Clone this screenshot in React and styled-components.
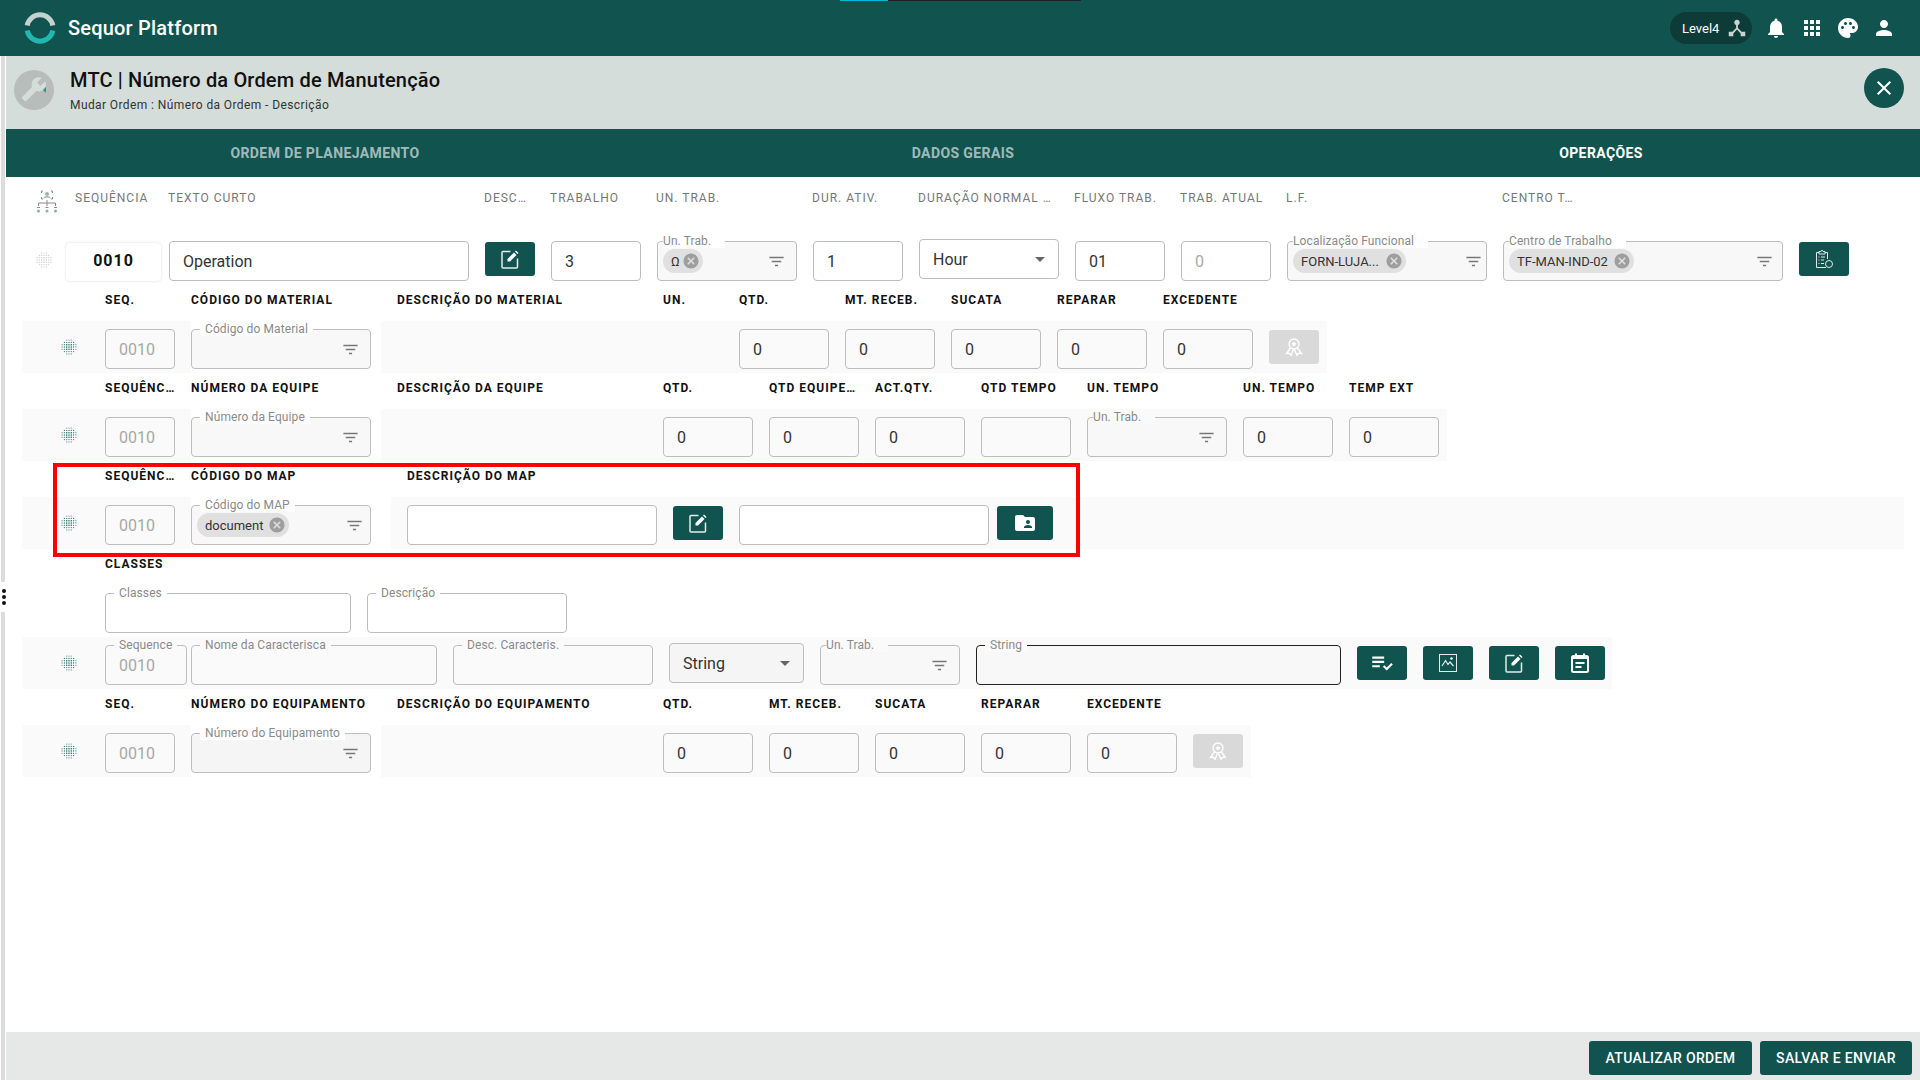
import React from 'react';
import styled, { createGlobalStyle } from 'styled-components';
import {
  MdDeviceHub, MdNotifications, MdApps, MdPalette, MdPerson, MdClose, MdFilterList,
  MdCancel, MdArrowDropDown, MdFolderShared, MdPlaylistAddCheck,
} from 'react-icons/md';

const GlobalStyle = createGlobalStyle`
  html, body { margin: 0; padding: 0; background: #fff; }
  body { font-family: Roboto, "Liberation Sans", sans-serif; }
`;

const TEAL = '#11544f';

const Page = styled.div`
  position: relative;
  width: 1920px;
  height: 1080px;
  overflow: hidden;
  display: flex;
  flex-direction: column;
`;

const TopBar = styled.header`
  position: relative;
  height: 56px;
  flex-shrink: 0;
  background: ${TEAL};
  display: flex;
  align-items: center;
  padding: 0 24px;
  box-sizing: border-box;
`;

const LoadStrip = styled.div`
  position: absolute;
  top: 0;
  left: ${p => p.$left}px;
  width: ${p => p.$w}px;
  height: 1px;
  background: ${p => p.$color};
`;

const Brand = styled.div`
  margin-left: 12px;
  font-size: 20px;
  font-weight: 500;
  color: #fff;
  letter-spacing: 0.2px;
`;

const TopRight = styled.div`
  margin-left: auto;
  display: flex;
  align-items: center;
  gap: 12px;
  color: #fff;
`;

const LevelPill = styled.div`
  width: 82px;
  height: 32px;
  box-sizing: border-box;
  border-radius: 16px;
  background: #0d3c38;
  display: flex;
  align-items: center;
  padding-left: 12px;
  gap: 7px;
  font-size: 13px;
  color: #fff;
  svg { color: #c9d3d1; }
`;

const Body = styled.div`
  flex: 1;
  min-height: 0;
  display: flex;
`;

const LeftStrip = styled.div`
  width: 6px;
  flex-shrink: 0;
  background: linear-gradient(to right, #fff 0 1px, #dcdcdc 1px 5px, #fff 5px);
`;

const KebabHandle = styled.div`
  position: absolute;
  left: 0;
  top: 582px;
  width: 8px;
  height: 30px;
  background: #fff;
  display: flex;
  flex-direction: column;
  align-items: center;
  justify-content: center;
  gap: 2px;
  span {
    width: 4px;
    height: 4px;
    border-radius: 50%;
    background: #111;
  }
`;

const Main = styled.main`
  flex: 1;
  min-width: 0;
  display: flex;
  flex-direction: column;
`;

const SubHeader = styled.div`
  height: 73px;
  flex-shrink: 0;
  background: #d5dddA;
  display: flex;
  align-items: flex-start;
  padding: 12px 16px 0 8px;
  box-sizing: border-box;
`;

const TitleBlock = styled.div`
  margin-left: 16px;
  display: flex;
  flex-direction: column;
  gap: 6px;
`;

const Title = styled.div`
  font-size: 20px;
  line-height: 24px;
  font-weight: 500;
  letter-spacing: 0.17px;
  color: #111;
`;

const SubTitle = styled.div`
  font-size: 12px;
  line-height: 14px;
  color: #333;
  letter-spacing: 0.4px;
`;

const BadgeSvg = styled.svg`
  margin-top: 2px;
  flex-shrink: 0;
`;

const CloseButton = styled.div`
  margin-left: auto;
  width: 40px;
  height: 40px;
  border-radius: 50%;
  background: ${TEAL};
  color: #fff;
  display: flex;
  align-items: center;
  justify-content: center;
`;

const Tabs = styled.nav`
  height: 48px;
  flex-shrink: 0;
  background: ${TEAL};
  display: grid;
  grid-template-columns: repeat(3, 1fr);
`;

const Tab = styled.div`
  display: flex;
  align-items: center;
  justify-content: center;
  padding-bottom: 1px;
  font-size: 14px;
  font-weight: 700;
  letter-spacing: 0.4px;
  color: ${p => (p.$active ? '#fff' : 'rgba(255,255,255,0.62)')};
`;

const Content = styled.section`
  position: relative;
  flex: 1;
  min-height: 0;
`;

const Highlight = styled.div`
  position: absolute;
  left: 47px;
  top: 286px;
  width: 1027px;
  height: 94px;
  box-sizing: border-box;
  border: 4px solid #f00;
  pointer-events: none;
`;

const ColumnBar = styled.div`
  height: 64px;
  box-sizing: border-box;
  padding-left: 30px;
  display: flex;
  align-items: flex-start;
`;

const ColumnIcon = styled.div`
  width: 39px;
  margin-top: 13px;
  flex-shrink: 0;
`;

const ColumnLabel = styled.div`
  width: ${p => p.$w}px;
  flex-shrink: 0;
  margin-top: 14px;
  font-size: 12px;
  line-height: 14px;
  letter-spacing: 1px;
  color: #777;
  white-space: nowrap;
`;

const OperationRow = styled.div`
  height: 44px;
  box-sizing: border-box;
  padding-left: 30px;
  display: flex;
  align-items: flex-start;
  gap: 16px;
`;

const SeqCard = styled.div`
  width: 95px;
  height: 38px;
  margin: 2px -8px 0 0;
  box-sizing: border-box;
  flex-shrink: 0;
  border-radius: 4px;
  box-shadow: 0 0 3px rgba(0, 0, 0, 0.14);
  background: #fff;
  display: flex;
  align-items: center;
  justify-content: center;
  font-size: 16px;
  font-weight: 700;
  letter-spacing: 1px;
  color: #111;
  padding-bottom: 4px;
`;

const HeadRow = styled.div`
  height: 36px;
  box-sizing: border-box;
  padding: 8px 0 0 99px;
  display: flex;
`;

const Head = styled.div`
  width: ${p => (p.$w ? `${p.$w}px` : 'auto')};
  flex-shrink: 0;
  font-size: 12px;
  line-height: 14px;
  font-weight: 700;
  letter-spacing: 1px;
  color: #111;
  white-space: nowrap;
`;

const Row = styled.div`
  height: 52px;
  margin-left: 16px;
  width: ${p => (p.$w ? `${p.$w}px` : 'auto')};
  display: flex;
  align-items: stretch;
`;

const LeadCell = styled.div`
  width: 169px;
  flex-shrink: 0;
  box-sizing: border-box;
  background: #fafafa;
  padding: 8px 0 0 39px;
  display: flex;
  align-items: flex-start;
  gap: 28px;
`;

const SelectCell = styled.div`
  width: ${p => p.$w}px;
  flex-shrink: 0;
  box-sizing: border-box;
  padding-top: 8px;
  background: #fff;
`;

const RestCell = styled.div`
  flex: 1;
  box-sizing: border-box;
  background: #fafafa;
  padding: 8px 8px 0 ${p => p.$lead || 0}px;
  display: flex;
  align-items: flex-start;
  gap: 16px;
`;

const Spacer = styled.div`
  width: ${p => p.$w}px;
  flex-shrink: 0;
`;

const Box = styled.div`
  position: relative;
  width: ${p => p.$w}px;
  height: 40px;
  flex-shrink: 0;
  box-sizing: border-box;
  border: ${p => (p.$dark ? '1.5px solid #222' : '1px solid #bdbdbd')};
  border-radius: 4px;
  background: ${p => p.$fill || 'transparent'};
  display: flex;
  align-items: center;
  padding: 0 13px;
  font-size: 16px;
  color: ${p => (p.$muted ? '#a8a8a8' : '#333')};
`;

const Legend = styled.span`
  position: absolute;
  top: -8px;
  left: ${p => (p.$tight ? 5 : 8)}px;
  padding: ${p => (p.$tight ? '0 14px 0 0' : '0 5px')};
  font-size: 12px;
  line-height: 14px;
  letter-spacing: 0.1px;
  color: #8a8a8a;
  background: ${p => p.$notch || '#fff'};
  white-space: nowrap;
`;

const FilterBox = styled(Box)`
  padding: 0 ${p => p.$pad}px 0 5px;
`;

const FilterSlot = styled.span`
  margin-left: auto;
  display: flex;
  color: #777;
`;

const Chip = styled.span`
  height: 24px;
  width: ${p => p.$w}px;
  box-sizing: border-box;
  border-radius: 12px;
  background: #e0e0e0;
  display: flex;
  align-items: center;
  justify-content: space-between;
  padding: 0 3px 0 8px;
  font-size: 13px;
  color: #333;
  white-space: nowrap;
  svg { color: #9e9e9e; flex-shrink: 0; }
`;

const Dropdown = styled(Box)`
  margin-top: -2px;
  justify-content: space-between;
  padding-right: 6px;
  svg { color: #666; }
`;

const ActionButton = styled.div`
  width: ${p => p.$w || 50}px;
  height: 34px;
  margin: 1px 0 0 ${p => p.$pull || 0}px;
  flex-shrink: 0;
  border-radius: 3px;
  background: ${p => (p.$disabled ? '#d9d9d9' : TEAL)};
  color: #fff;
  display: flex;
  align-items: center;
  justify-content: center;
`;

const ClassRow = styled.div`
  margin: 8px 0 4px 99px;
  display: flex;
  gap: 16px;
`;

const CharRow = styled.div`
  width: 1590px;
  height: 52px;
  margin-left: 16px;
  box-sizing: border-box;
  background: #fafafa;
  padding: 8px 0 0 39px;
  display: flex;
  align-items: flex-start;
  gap: 16px;
`;

const CharSeq = styled(Box)`
  margin: 0 -12px 0 12px;
`;

const Footer = styled.footer`
  height: 48px;
  flex-shrink: 0;
  background: #e6e8e8;
  display: flex;
  justify-content: flex-end;
  align-items: flex-start;
  gap: 8px;
  padding: 9px 8px 0 0;
  box-sizing: border-box;
`;

const FooterButton = styled.div`
  width: ${p => p.$w}px;
  height: 34px;
  border-radius: 3px;
  background: ${TEAL};
  color: #fff;
  font-size: 14px;
  font-weight: 500;
  letter-spacing: 0.35px;
  display: flex;
  align-items: center;
  justify-content: center;
`;

const DotSvg = styled.svg`
  width: 16px;
  height: 16px;
  flex-shrink: 0;
  margin: ${p => (p.$light ? '11px -2px 0 0' : '10px 0 0 0')};
`;

const DotGrid = ({ light }) => {
  const dots = [];
  for (let r = 0; r < 7; r++) {
    for (let c = 0; c < 7; c++) {
      const d = Math.max(Math.abs(r - 3), Math.abs(c - 3));
      if (Math.abs(r - 3) + Math.abs(c - 3) > 4) continue;
      const tone = d <= 1 ? '#1d5f58' : d === 2 ? '#3f7a72' : '#6f9a95';
      dots.push(
        <circle
          key={`${r}-${c}`}
          cx={1.1 + c * 2.3}
          cy={1.1 + r * 2.3}
          r={d <= 1 ? 0.75 : 0.65}
          fill={light ? '#cfcfcf' : tone}
        />
      );
    }
  }
  return <DotSvg $light={light} viewBox="0 0 16 16">{dots}</DotSvg>;
};

const Logo = () => (
  <svg width="32" height="32" viewBox="0 0 32 32">
    <path d="M3.2 13.5A13 13 0 0 1 28.8 13.5" fill="none" stroke="#c3d2cf" strokeWidth="5" />
    <path d="M3.2 18.5A13 13 0 0 0 28.8 18.5" fill="none" stroke="#1fb9b1" strokeWidth="5" />
  </svg>
);

const WrenchBadge = () => (
  <BadgeSvg width="40" height="40" viewBox="0 0 40 40">
    <circle cx="20" cy="20" r="20" fill="#b8bcbb" />
    <g transform="translate(33 6) scale(-1.1 1.1)" fill="#d5dddA">
      <path d="M22.7 19l-9.1-9.1c.9-2.3.4-5-1.5-6.9-2-2-5-2.4-7.4-1.3L9 6 6 9 1.6 4.7C.4 7.1.9 10.1 2.9 12.1c1.9 1.9 4.6 2.4 6.9 1.5l9.1 9.1c.4.4 1 .4 1.4 0l2.3-2.3c.5-.4.5-1.1.1-1.4z" />
    </g>
    <path d="M32 17l-3 3 3 3z" fill="#10a37f" />
  </BadgeSvg>
);

const TreeIcon = () => (
  <svg width="22" height="23" viewBox="0 0 22 23" fill="none" stroke="#8a8a8a" strokeWidth="1">
    <path d="M7 1H5.5V3M15 1h1.5V3M7 9H5.5V7M15 9h1.5V7" />
    <circle cx="11" cy="4" r="2" fill="#9fb5b2" stroke="none" />
    <path d="M7.5 8c.5-1.5 6.500-1.500 7 0" />
    <path d="M11 10v3M2.500 16v-3h17v3M11 13v3" />
    <circle cx="2.500" cy="21" r="1.500" fill="#7fb8a8" stroke="none" />
    <circle cx="11" cy="21" r="1.500" fill="#7fb8a8" stroke="none" />
    <circle cx="19.500" cy="21" r="1.500" fill="#7fb8a8" stroke="none" />
    <path d="M1 17.500h3M9.500 17.500h3M18 17.500h3" />
  </svg>
);

const EditIcon = () => (
  <svg width="20" height="20" viewBox="0 0 20 20" fill="none">
    <path d="M10.500 2.500H3a1 1 0 0 0-1 1V18a1 1 0 0 0 1 1h13.500a1 1 0 0 0 1-1V9.500" stroke="#e4ecea" strokeWidth="1.500" />
    <path d="M7.500 12.500V10L14 3.500l2.500 2.500-6.500 6.500z" fill="#fff" />
    <path d="M15 2.500l1-1 2.500 2.500-1 1z" fill="#fff" />
  </svg>
);

const RosetteIcon = () => (
  <svg width="18" height="18" viewBox="0 0 18 18" fill="none" stroke="#fff" strokeWidth="1.300">
    <circle cx="9" cy="6" r="5" />
    <path d="M9 3.300l.8 1.700 1.800.2-1.300 1.300.3 1.800L9 7.500l-1.600.8.300-1.800-1.300-1.300 1.800-.2z" fill="#fff" stroke="none" />
    <path d="M5.500 10L1.500 15.500l3-.3L6 17.500l2.500-6" />
    <path d="M12.500 10l4 5.500-3-.3L12 17.500l-2.500-6" />
  </svg>
);

const ClipboardClock = () => (
  <svg width="20" height="20" viewBox="0 0 20 20" fill="none" stroke="#dfe8e6" strokeWidth="1">
    <path d="M12 18.500H2.500V3.500H5M11 3.500h2.500V10" />
    <path d="M5 5V2.500h2L8 1l1 1.500h2V5z" />
    <path d="M4.500 8h1M7 8h4M4.500 11h1M7 11h3M4.500 14.500h1M7 14.500h3" />
    <circle cx="15" cy="15" r="3.500" />
  </svg>
);

const PictureIcon = () => (
  <svg width="18" height="18" viewBox="0 0 18 18" fill="none" stroke="#e4ecea" strokeWidth="1">
    <rect x="0.500" y="0.500" width="17" height="17" />
    <path d="M3 12l3.500-5.500 2.500 4 2-2.500 3.500 4" strokeWidth="1.200" />
    <circle cx="12.500" cy="4.500" r="1.200" fill="#fff" stroke="none" />
  </svg>
);

const NoteIcon = () => (
  <svg width="20" height="20" viewBox="0 0 20 20" fill="none" stroke="#fff">
    <rect x="2" y="3" width="16" height="16" rx="1.500" strokeWidth="2" />
    <path d="M6 .5v3M14 .5v3" strokeWidth="2" />
    <path d="M2 5h16" strokeWidth="2" />
    <path d="M5.500 10h9M5.500 14h6" strokeWidth="2" />
  </svg>
);

const Seq = () => <Box $w={70} $muted>0010</Box>;

const Select = ({ w = 180, label, tight, chip, chipW, fill = '#f8f8f8', notch, pad = 10 }) => (
  <FilterBox $w={w} $fill={fill} $pad={pad}>
    <Legend $tight={tight} $notch={notch}>{label}</Legend>
    {chip && (
      <Chip $w={chipW}>
        {chip}
        <MdCancel size={18} />
      </Chip>
    )}
    <FilterSlot><MdFilterList size={19} /></FilterSlot>
  </FilterBox>
);

const Num = ({ v = '0', w = 90 }) => <Box $w={w}>{v}</Box>;

const Heads = ({ items }) => (
  <HeadRow>
    {items.map(([text, w], i) => (
      <Head key={i} $w={w}>{text}</Head>
    ))}
  </HeadRow>
);

const topColumns = [
  ['SEQUÊNCIA', 93], ['TEXTO CURTO', 316], ['DESC…', 66], ['TRABALHO', 106], ['UN. TRAB.', 156],
  ['DUR. ATIV.', 106], ['DURAÇÃO NORMAL …', 156], ['FLUXO TRAB.', 106], ['TRAB. ATUAL', 106],
  ['L.F.', 216], ['CENTRO T…', 100],
];

const materialHeads = [
  ['SEQ.', 86], ['CÓDIGO DO MATERIAL', 206], ['DESCRIÇÃO DO MATERIAL', 266], ['UN.', 76],
  ['QTD.', 106], ['MT. RECEB.', 106], ['SUCATA', 106], ['REPARAR', 106], ['EXCEDENTE'],
];

const teamHeads = [
  ['SEQUÊNC…', 86], ['NÚMERO DA EQUIPE', 206], ['DESCRIÇÃO DA EQUIPE', 266], ['QTD.', 106],
  ['QTD EQUIPE…', 106], ['ACT.QTY.', 106], ['QTD TEMPO', 106], ['UN. TEMPO', 156], ['UN. TEMPO', 106], ['TEMP EXT'],
];

const mapHeads = [['SEQUÊNC…', 86], ['CÓDIGO DO MAP', 216], ['DESCRIÇÃO DO MAP']];

const equipmentHeads = [
  ['SEQ.', 86], ['NÚMERO DO EQUIPAMENTO', 206], ['DESCRIÇÃO DO EQUIPAMENTO', 266], ['QTD.', 106],
  ['MT. RECEB.', 106], ['SUCATA', 106], ['REPARAR', 106], ['EXCEDENTE'],
];

const App = () => (
  <Page>
    <GlobalStyle />
    <TopBar>
      <LoadStrip $left={840} $w={48} $color="#00bcd4" />
      <LoadStrip $left={888} $w={193} $color="#222" />
      <Logo />
      <Brand>Sequor Platform</Brand>
      <TopRight>
        <LevelPill>Level4 <MdDeviceHub size={22} /></LevelPill>
        <MdNotifications size={24} />
        <MdApps size={24} />
        <MdPalette size={24} />
        <MdPerson size={24} />
      </TopRight>
    </TopBar>
    <KebabHandle><span /><span /><span /></KebabHandle>
    <Body>
      <LeftStrip />
      <Main>
        <SubHeader>
          <WrenchBadge />
          <TitleBlock>
            <Title>MTC | Número da Ordem de Manutenção</Title>
            <SubTitle>Mudar Ordem : Número da Ordem - Descrição</SubTitle>
          </TitleBlock>
          <CloseButton><MdClose size={24} /></CloseButton>
        </SubHeader>
        <Tabs>
          <Tab>ORDEM DE PLANEJAMENTO</Tab>
          <Tab>DADOS GERAIS</Tab>
          <Tab $active>OPERAÇÕES</Tab>
        </Tabs>
        <Content>
          <ColumnBar>
            <ColumnIcon><TreeIcon /></ColumnIcon>
            {topColumns.map(([text, w]) => (
              <ColumnLabel key={text} $w={w}>{text}</ColumnLabel>
            ))}
          </ColumnBar>

          <OperationRow>
            <DotGrid light />
            <SeqCard>0010</SeqCard>
            <Box $w={300}>Operation</Box>
            <ActionButton><EditIcon /></ActionButton>
            <Num v="3" />
            <Select w={140} label="Un. Trab." tight chip="Ω" chipW={40} />
            <Num v="1" />
            <Dropdown $w={140}>Hour<MdArrowDropDown size={24} /></Dropdown>
            <Num v="01" />
            <Box $w={90} $muted>0</Box>
            <Select w={200} label="Localização Funcional" tight chip="FORN-LUJA..." chipW={113} pad={3} />
            <Select w={280} label="Centro de Trabalho" tight chip="TF-MAN-IND-02" chipW={125} pad={8} />
            <ActionButton><ClipboardClock /></ActionButton>
          </OperationRow>

          <Heads items={materialHeads} />
          <Row $w={1305}>
            <LeadCell><DotGrid /><Seq /></LeadCell>
            <SelectCell $w={190}><Select label="Código do Material" /></SelectCell>
            <RestCell>
              <Spacer $w={342} />
              <Num /><Num /><Num /><Num /><Num />
              <ActionButton $disabled><RosetteIcon /></ActionButton>
            </RestCell>
          </Row>

          <Heads items={teamHeads} />
          <Row $w={1425}>
            <LeadCell><DotGrid /><Seq /></LeadCell>
            <SelectCell $w={190}><Select label="Número da Equipe" /></SelectCell>
            <RestCell>
              <Spacer $w={266} />
              <Num /><Num /><Num /><Num v="" />
              <Select w={140} label="Un. Trab." tight notch="#fafafa" />
              <Num /><Num />
            </RestCell>
          </Row>

          <Heads items={mapHeads} />
          <Row $w={1882}>
            <LeadCell><DotGrid /><Seq /></LeadCell>
            <SelectCell $w={200}><Select label="Código do MAP" chip="document" chipW={92} pad={6} /></SelectCell>
            <RestCell $lead={16}>
              <Box $w={250} $fill="#fff" />
              <ActionButton><EditIcon /></ActionButton>
              <Box $w={250} $fill="#fff" />
              <ActionButton $w={56} $pull={-8}><MdFolderShared size={24} /></ActionButton>
            </RestCell>
          </Row>

          <Heads items={[['CLASSES']]} />
          <ClassRow>
            <Box $w={246}><Legend>Classes</Legend></Box>
            <Box $w={200}><Legend>Descrição</Legend></Box>
          </ClassRow>

          <CharRow>
            <DotGrid />
            <CharSeq $w={82} $muted><Legend $notch="#fafafa">Sequence</Legend>0010</CharSeq>
            <Box $w={246}><Legend $notch="#fafafa">Nome da Caracterisca</Legend></Box>
            <Box $w={200}><Legend $notch="#fafafa">Desc. Caracteris.</Legend></Box>
            <Dropdown $w={135} $fill="#f5f5f5">String<MdArrowDropDown size={24} /></Dropdown>
            <Select w={140} label="Un. Trab." tight notch="#fafafa" />
            <Box $w={365} $dark $fill="#f8f8f8"><Legend $notch="#fafafa">String</Legend></Box>
            <ActionButton><MdPlaylistAddCheck size={26} /></ActionButton>
            <ActionButton><PictureIcon /></ActionButton>
            <ActionButton><EditIcon /></ActionButton>
            <ActionButton><NoteIcon /></ActionButton>
          </CharRow>

          <Heads items={equipmentHeads} />
          <Row $w={1229}>
            <LeadCell><DotGrid /><Seq /></LeadCell>
            <SelectCell $w={190}><Select label="Número do Equipamento" fill="#f5f5f5" /></SelectCell>
            <RestCell>
              <Spacer $w={266} />
              <Num /><Num /><Num /><Num /><Num />
              <ActionButton $disabled><RosetteIcon /></ActionButton>
            </RestCell>
          </Row>

          <Highlight />
        </Content>
        <Footer>
          <FooterButton $w={163}>ATUALIZAR ORDEM</FooterButton>
          <FooterButton $w={152}>SALVAR E ENVIAR</FooterButton>
        </Footer>
      </Main>
    </Body>
  </Page>
);

export default App;
